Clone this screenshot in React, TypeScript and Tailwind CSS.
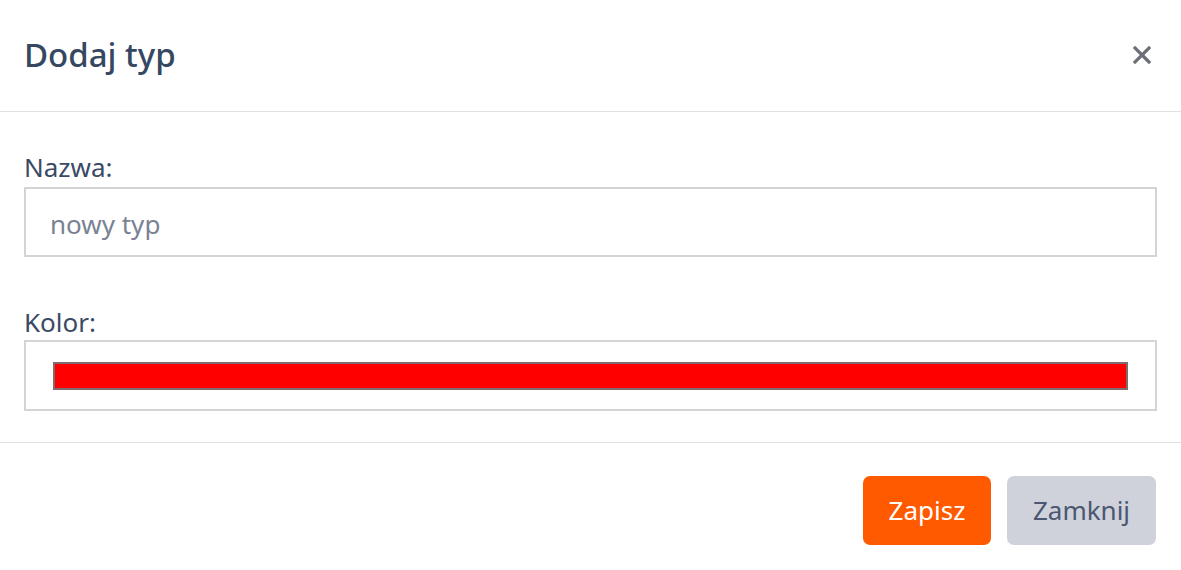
import React from 'react';

const font = { fontFamily: '"Noto Sans", "Open Sans", sans-serif' };

export default function App() {
  return (
    <div className="w-[1181px] h-[570px] bg-white overflow-hidden" style={font}>
      {/* Header */}
      <div className="h-[112px] flex items-center justify-between pl-[24px] pr-[30px] border-b border-[#dee2e6]">
        <h1 className="text-[33px] font-medium text-[#354761] leading-none -mt-[3px]">Dodaj typ</h1>
        <button className="text-[#6d7079] -mt-[2px]" aria-label="Zamknij">
          <svg width="18" height="18" viewBox="0 0 18 18">
            <path d="M2 2 L16 16 M16 2 L2 16" stroke="currentColor" strokeWidth="3.2" strokeLinecap="square" />
          </svg>
        </button>
      </div>

      {/* Body */}
      <div className="px-[24px] pt-[38px] border-b border-[#dee2e6] h-[331px]">
        <label className="block text-[26px] text-[#3a4a64] leading-[34px] mb-[3px]">Nazwa:</label>
        <div className="h-[70px] border-2 border-[#d4d4d4] flex items-center pl-[24px] pt-[4px]">
          <span className="text-[26px] text-[#7a8293]">nowy typ</span>
        </div>
        <label className="block text-[26px] text-[#3a4a64] leading-[34px] mt-[48px] mb-[1px]">Kolor:</label>
        <div className="h-[71px] border-2 border-[#d4d4d4] flex items-center px-[27px]">
          <div className="h-[28px] flex-1 bg-[#ff0000] border-2 border-[#7f6b6b]" />
        </div>
      </div>

      {/* Footer */}
      <div className="flex justify-end gap-[16px] pr-[25px] pt-[33px]">
        <button className="h-[69px] w-[128px] rounded-[7px] bg-[#ff5a00] text-white text-[26px]">Zapisz</button>
        <button className="h-[69px] w-[149px] rounded-[7px] bg-[#cfd2da] text-[#4b5771] text-[26px]">Zamknij</button>
      </div>
    </div>
  );
}
